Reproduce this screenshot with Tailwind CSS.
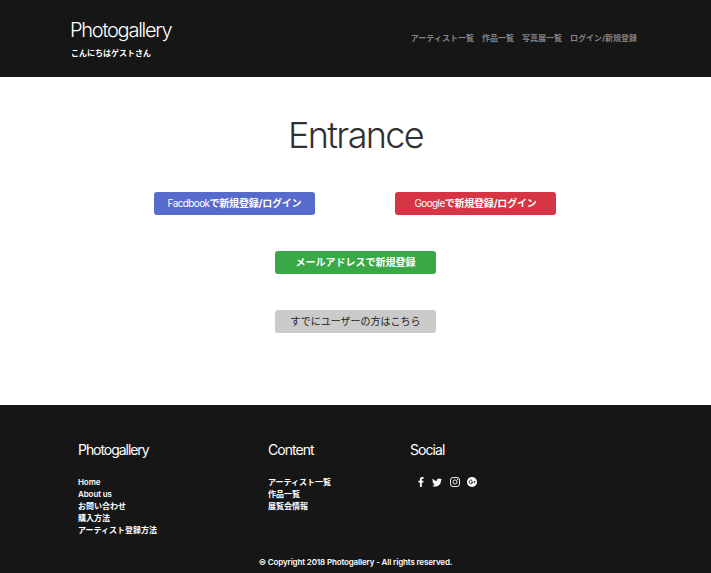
<!DOCTYPE html>
<html lang="ja">
<head>
<meta charset="utf-8">
<title>Photogallery</title>
<script src="https://cdn.jsdelivr.net/npm/@tailwindcss/browser@4"></script>
</head>
<body class="flex h-[573px] w-[711px] flex-col overflow-hidden bg-white font-['Inter','Noto_Sans_CJK_JP',sans-serif] text-[8px] whitespace-nowrap">
<header class="flex h-[77px] shrink-0 justify-between bg-[#161616] pl-[70px] pr-[74px] text-white">
  <div class="pt-[18px]">
    <h1 class="text-[20px] leading-6 font-light tracking-[-1.25px]">Photogallery</h1>
    <p class="mt-[5px] pl-px leading-3 font-bold">こんにちはゲストさん</p>
  </div>
  <nav class="flex gap-2 pt-8 leading-3 font-bold text-[#848484]">
    <a>アーティスト一覧</a><a>作品一覧</a><a>写真展一覧</a><a>ログイン/新規登録</a>
  </nav>
</header>
<main class="flex h-[328px] shrink-0 flex-col items-center pt-9">
  <h2 class="text-[36px] leading-11 font-light tracking-[-1.65px] text-[#303030]">Entrance</h2>
  <div class="mt-[35px] mr-px flex gap-20 text-[10px] leading-[23px] text-white">
    <a class="h-[23px] w-[161px] rounded-[3px] bg-[#576bcd] text-center tracking-[-0.2px]"><span class="font-normal tracking-[-0.6px]">Facdbook</span><span class="font-bold">で新規登録/ログイン</span></a>
    <a class="h-[23px] w-[161px] rounded-[3px] bg-[#d73543] text-center tracking-[-0.2px]"><span class="font-normal tracking-[-0.6px]">Google</span><span class="font-bold">で新規登録/ログイン</span></a>
  </div>
  <a class="mt-9 h-[23px] w-[161px] rounded-[3px] bg-[#39a947] text-center text-[10px] leading-[23px] font-bold text-white">メールアドレスで新規登録</a>
  <a class="mt-9 h-[23px] w-[161px] rounded-[3px] bg-[#cbcbcb] text-center text-[10px] leading-[23px] font-normal text-[#222]">すでにユーザーの方はこちら</a>
</main>
<footer class="flex h-[168px] shrink-0 flex-col bg-[#161616] pt-9 text-white">
  <div class="flex h-[109px] pl-[78px] leading-3 font-bold">
    <section class="w-[190px]">
      <h3 class="mb-[17px] text-[14px] leading-[18px] font-normal tracking-[-1.05px]">Photogallery</h3>
      <ul><li class="h-3 font-semibold tracking-[-0.1px]">Home</li><li class="h-3 font-semibold tracking-[-0.1px]">About us</li><li class="h-3">お問い合わせ</li><li class="h-3">購入方法</li><li class="h-3">アーティスト登録方法</li></ul>
    </section>
    <section class="w-[142px]">
      <h3 class="mb-[17px] text-[14px] leading-[18px] font-normal tracking-[-0.95px]">Content</h3>
      <ul><li class="h-3">アーティスト一覧</li><li class="h-3">作品一覧</li><li class="h-3">展覧会情報</li></ul>
    </section>
    <section>
      <h3 class="mb-[17px] text-[14px] leading-[18px] font-normal tracking-[-0.95px]">Social</h3>
      <div class="flex h-3 items-center pl-2">
        <svg class="h-[10px] w-[6px]" viewBox="95 0 864 1664" fill="currentColor"><path d="M959 12v264H802q-86 0-116 36t-30 108v189h293l-39 296H656v759H350V905H95V609h255V391q0-186 104-288.5T731 0q147 0 228 12z"/></svg>
        <svg class="ml-2 h-[9px] w-[10px]" viewBox="44 256 1576 1280" fill="currentColor"><path d="M1620 408q-67 98-162 167 1 14 1 42 0 130-38 259.500T1305.500 1125 1121 1335.500t-258 146-323 54.500q-271 0-496-145 35 4 78 4 225 0 401-138-105-2-188-64.500T221 1033q33 5 61 5 43 0 85-11-112-23-185.500-111.500T108 710v-4q68 38 146 41-66-44-105-115t-39-154q0-88 44-163 121 149 294.500 238.500T820 653q-8-38-8-74 0-134 94.500-228.500T1135 256q140 0 236 102 109-21 205-78-37 115-142 178 93-10 186-50z"/></svg>
        <svg class="ml-2 size-[10px]" viewBox="0 0 20 20" fill="none" stroke="currentColor" stroke-width="1.8"><rect x="1" y="1" width="18" height="18" rx="5"/><circle cx="10" cy="10" r="4.200"/><circle cx="15.200" cy="4.800" r="1.200" fill="currentColor" stroke="none"/></svg>
        <svg class="ml-[7px] size-[10px]" viewBox="0 0 20 20"><circle cx="10" cy="10" r="10" fill="currentColor"/><path d="M10.500 7.300A3.600 3.600 0 1 0 11.500 10.200H8" fill="none" stroke="#161616" stroke-width="1.800"/><path d="M15 8v4M13 10h4" stroke="#161616" stroke-width="1.500"/></svg>
      </div>
    </section>
  </div>
  <p class="mt-[6px] text-center leading-3 font-semibold tracking-[-0.14px]">© Copyright 2018 Photogallery - All rights reserved.</p>
</footer>
</body>
</html>
